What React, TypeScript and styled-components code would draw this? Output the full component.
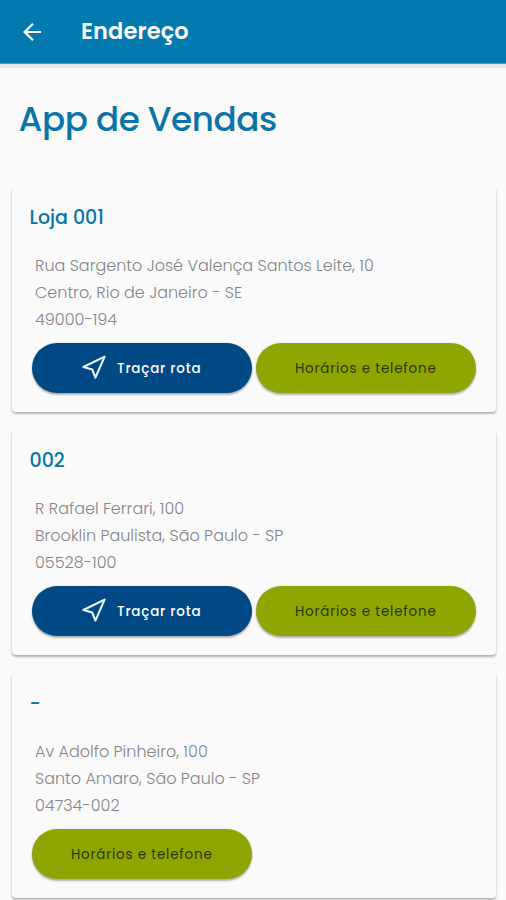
import React from 'react';
import styled, { createGlobalStyle } from 'styled-components';

const GlobalStyle = createGlobalStyle`
  * { box-sizing: border-box; }
  html, body { margin: 0; padding: 0; background: #fafafa; }
  body { height: 900px; overflow: hidden; font-family: Poppins, Inter, sans-serif; font-feature-settings: "cv11" 1; }
`;

const Screen = styled.div`
  width: 100%;
  height: 900px;
  overflow: hidden;
  background: #fafafa;
`;

const AppBar = styled.header`
  display: flex;
  align-items: center;
  height: 64px;
  padding-left: 22px;
  background: #037aaf;
  border-bottom: 1px solid #5598b5;
  box-shadow: 0 4px 0 #e8e8ea;
`;

const BackButton = styled.button`
  display: flex;
  width: 20px;
  height: 20px;
  margin: 1px 39px 0 0;
  padding: 0;
  border: 0;
  background: none;
`;

const BarTitle = styled.h1`
  margin: 0 0 1px;
  color: #fff;
  font-size: 22.5px;
  font-weight: 600;
  line-height: 30px;
  letter-spacing: 0.12px;
`;

const Heading = styled.h2`
  margin: 0;
  padding: 32px 0 0 18.5px;
  height: 123px;
  color: #0874a8;
  font-size: 34.2px;
  font-weight: 500;
  line-height: 46px;
  letter-spacing: -0.42px;
`;

const StoreList = styled.main`
  display: flex;
  flex-direction: column;
  gap: 18px;
  padding: 0 10px 0 12px;
`;

const Card = styled.section`
  height: 225px;
  padding: 16px 20px 0 17.5px;
  border-radius: 4px;
  background: #fafafa;
  box-shadow: 0 2px 2px rgba(0, 0, 0, 0.22), 0 1px 3px rgba(0, 0, 0, 0.12);
`;

const StoreName = styled.h3`
  margin: 0 0 19px;
  color: #0874a8;
  font-size: 19px;
  font-weight: 500;
  line-height: 30px;
`;

const Address = styled.address`
  padding-left: 5.5px;
  color: #85858b;
  font-size: 16px;
  font-style: normal;
  font-weight: 300;
  line-height: 27px;
  white-space: nowrap;
`;

const Actions = styled.div`
  display: flex;
  gap: 4.5px;
  margin: 10px 0 0 2.5px;
`;

const PillButton = styled.button<{ $primary?: boolean }>`
  display: flex;
  align-items: center;
  justify-content: center;
  gap: 11px;
  width: 219.5px;
  height: 50px;
  padding: 1px 0 0;
  border: 0;
  border-radius: 25px;
  background: ${(p) => (p.$primary ? '#004985' : '#8fa602')};
  color: ${(p) => (p.$primary ? '#fff' : '#2b3503')};
  font: inherit;
  font-size: 13.5px;
  font-weight: ${(p) => (p.$primary ? 500 : 400)};
  letter-spacing: 0.78px;
  white-space: nowrap;
  box-shadow: 0 2px 2px rgba(0, 0, 0, 0.28), 0 0 2px rgba(0, 0, 0, 0.12);

  svg {
    flex: none;
    margin-top: -3px;
  }
`;

const BackIcon = () => (
  <svg width="20" height="20" viewBox="0 0 20 20" fill="none" stroke="#fff" strokeWidth="2.2">
    <path d="M19 10H2.5M11 1.8 2.6 10l8.4 8.2" />
  </svg>
);

const RouteIcon = () => (
  <svg width="24" height="24" viewBox="0 0 24 24" fill="none" stroke="#e8f6ff" strokeWidth="2.1" strokeLinejoin="round">
    <path d="M22.6 1.6 1.4 12l8.8 2.4 3.2 8.2Z" />
  </svg>
);

type Store = { name: string; lines: string[]; route: boolean };

const stores: Store[] = [
  {
    name: 'Loja 001',
    route: true,
    lines: ['Rua Sargento José Valença Santos Leite, 10', 'Centro, Rio de Janeiro - SE', '49000-194'],
  },
  {
    name: '002',
    route: true,
    lines: ['R Rafael Ferrari, 100', 'Brooklin Paulista, São Paulo - SP', '05528-100'],
  },
  {
    name: '-',
    route: false,
    lines: ['Av Adolfo Pinheiro, 100', 'Santo Amaro, São Paulo - SP', '04734-002'],
  },
];

export default function App() {
  return (
    <Screen>
      <GlobalStyle />
      <AppBar>
        <BackButton aria-label="Voltar"><BackIcon /></BackButton>
        <BarTitle>Endereço</BarTitle>
      </AppBar>
      <Heading>App de Vendas</Heading>
      <StoreList>
        {stores.map((store) => (
          <Card key={store.name}>
            <StoreName>{store.name}</StoreName>
            <Address>
              {store.lines.map((line) => (
                <div key={line}>{line}</div>
              ))}
            </Address>
            <Actions>
              {store.route && (
                <PillButton $primary>
                  <RouteIcon />
                  Traçar rota
                </PillButton>
              )}
              <PillButton>Horários e telefone</PillButton>
            </Actions>
          </Card>
        ))}
      </StoreList>
    </Screen>
  );
}
